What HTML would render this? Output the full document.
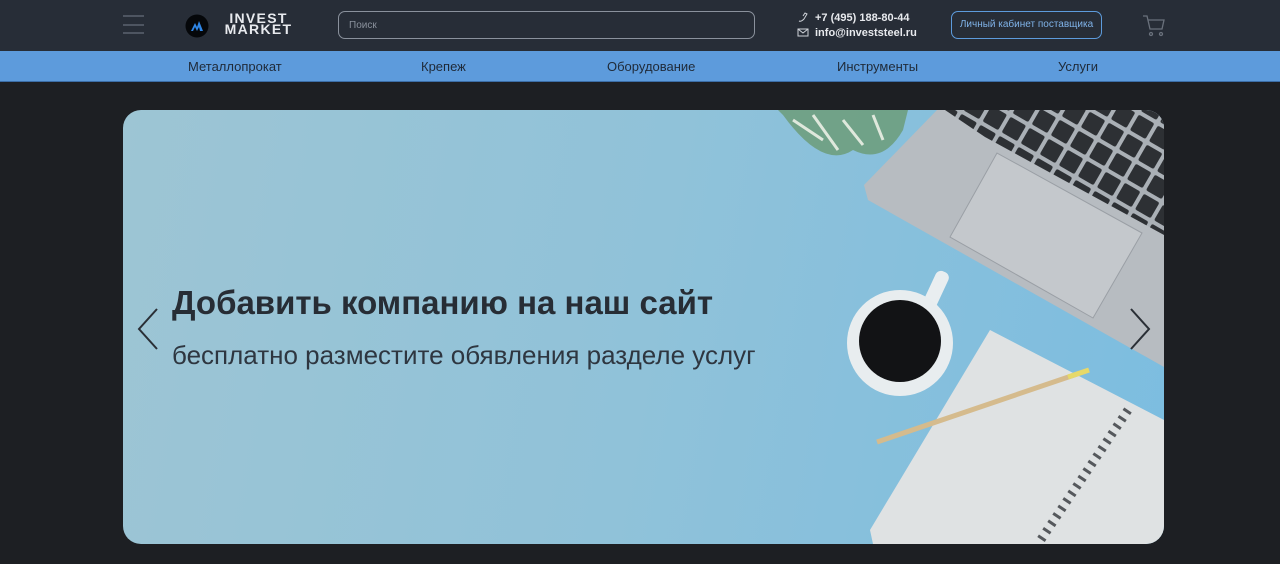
<!DOCTYPE html>
<html><head><meta charset="utf-8"><style>
*{margin:0;padding:0;box-sizing:border-box}
body{width:1280px;height:564px;background:#1d1f23;font-family:"Liberation Sans","DejaVu Sans",sans-serif;overflow:hidden;position:relative}
.hdr{position:absolute;left:0;top:0;width:1280px;height:51px;background:#272d37}
.nav{position:absolute;left:0;top:51px;width:1280px;height:31px;background:#5d9bdc;border-bottom:1px solid #3c6ea8}
.nav span{position:absolute;top:8px;font-size:13px;color:#1f2a38}
.search{position:absolute;left:338px;top:11px;width:417px;height:28px;border:1px solid #8a919c;border-radius:7px;font-size:10px;color:#8a919c;padding:8px 10px}
.btn{position:absolute;left:951px;top:11px;width:151px;height:28px;border:1px solid #5d9bdc;border-radius:7px;font-size:10px;color:#7fb2e8;text-align:center;line-height:26px}
.ct{position:absolute;left:815px;font-size:11px;font-weight:bold;color:#e8eaee}
.ban{position:absolute;left:123px;top:110px;width:1041px;height:434px;border-radius:18px;overflow:hidden;background:linear-gradient(100deg,#9dc5d4 0%,#90c2d9 50%,#7cbde0 100%)}
h1{position:absolute;left:172px;top:284px;font-size:33px;font-weight:bold;color:#272d35;white-space:nowrap}
.sub{position:absolute;left:172px;top:340px;font-size:26px;color:#2e3640;white-space:nowrap}
</style></head><body>
<div class="hdr">
<div style="position:absolute;left:123px;top:15px;width:21px;height:2px;background:#4e5561"></div>
<div style="position:absolute;left:123px;top:24px;width:21px;height:2px;background:#4e5561"></div>
<div style="position:absolute;left:123px;top:32px;width:21px;height:2px;background:#4e5561"></div>
<svg style="position:absolute;left:185px;top:14px" width="24" height="24"><circle cx="12" cy="12" r="11.5" fill="#05070a"/><path d="M6 17 L10 9 L12 13 L14 7 L18 17 L15 17 L14 13 L12 17 L10 13 L8 17Z" fill="#2f86e6"/></svg>
<div style="position:absolute;left:219px;top:13px;font-size:14px;font-weight:bold;color:#e8eaee;line-height:11px;letter-spacing:1.3px;text-align:center;width:79px">INVEST<br>MARKET</div>
<div class="search">Поиск</div>
<svg style="position:absolute;left:797px;top:12px" width="12" height="28" fill="none" stroke="#cfd3d9" stroke-width="1"><path d="M2 9 Q4 10 7 7 L10 2 L8 1 L6 4"/><rect x="1" y="17" width="10" height="7"/><path d="M1 17 L6 21 L11 17"/></svg>
<div class="ct" style="top:12px">+7 (495) 188-80-44</div>
<div class="ct" style="top:27px">info@investsteel.ru</div>
<div class="btn">Личный кабинет поставщика</div>
<svg style="position:absolute;left:1142px;top:14px" width="24" height="24" fill="none" stroke="#6a717c" stroke-width="1.3"><path d="M1 2 L5 2 L8 15 L20 15 L22 6 L6 6"/><circle cx="9" cy="20" r="1.5"/><circle cx="19" cy="20" r="1.5"/></svg>
</div>
<div class="nav"><span style="left:188px">Металлопрокат</span><span style="left:421px">Крепеж</span><span style="left:607px">Оборудование</span><span style="left:837px">Инструменты</span><span style="left:1058px">Услуги</span></div>
<div class="ban">
<svg width="1041" height="434" style="position:absolute;left:0;top:0">
<defs><pattern id="k" width="22" height="22" patternUnits="userSpaceOnUse" patternTransform="rotate(30)"><rect width="22" height="22" fill="#aab0b6"/><rect x="2" y="2" width="18" height="18" rx="2" fill="#2d3034"/></pattern></defs>
<polygon points="814,0 741,75 745,90 1041,257 1041,0" fill="#b7bcc1"/>
<polygon points="822,0 862,27 1041,125 1041,0" fill="url(#k)"/>
<polygon points="874,43 827,127 970,208 1019,123" fill="#c4c8cc" stroke="#9a9fa5"/>
<path d="M660 5 Q700 60 730 40 Q760 55 780 20 L785 0 L655 0Z" fill="#6e9f7e" opacity="0.9"/>
<path d="M670 10 L700 30 M690 5 L715 40 M720 10 L740 35 M750 5 L760 30" stroke="#dfe8dc" stroke-width="3"/>
<rect x="806" y="160" width="14" height="40" rx="6" transform="rotate(25 813 180)" fill="#e9eef0"/>
<polygon points="867,220 1041,310 1041,434 750,434 747,420" fill="#dfe2e3"/>
<path d="M1005 300 L915 434" stroke="#55585c" stroke-width="9" stroke-dasharray="3 6"/>
<line x1="754" y1="332" x2="966" y2="260" stroke="#d5bb8d" stroke-width="5"/>
<line x1="945" y1="267" x2="966" y2="260" stroke="#e6d96a" stroke-width="5"/>
<circle cx="777" cy="233" r="53" fill="#e8edef"/>
<circle cx="777" cy="231" r="41" fill="#121315"/>
</svg>
<svg width="24" height="44" style="position:absolute;left:13px;top:197px" fill="none" stroke="#2a2f36" stroke-width="2"><path d="M21 2 L3 22 L21 42"/></svg>
<svg width="24" height="44" style="position:absolute;left:1005px;top:197px" fill="none" stroke="#2a2f36" stroke-width="2"><path d="M3 2 L21 22 L3 42"/></svg>
</div>
<h1>Добавить компанию на наш сайт</h1>
<div class="sub">бесплатно разместите обявления разделе услуг</div>
</body></html>
